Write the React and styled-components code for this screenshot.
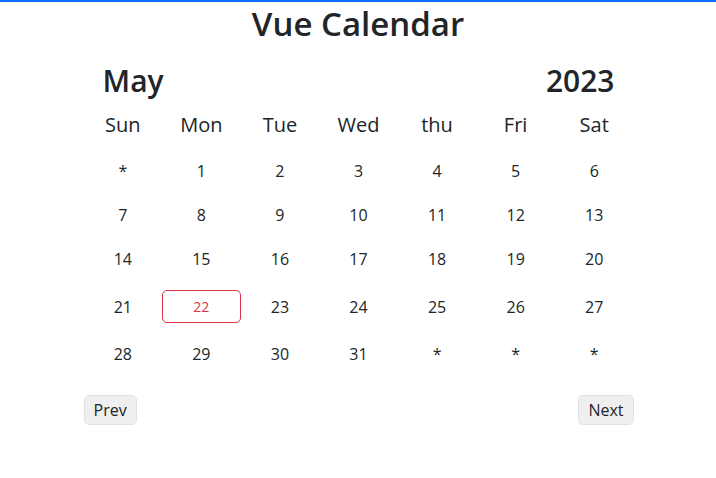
import React from "react";
import styled, { createGlobalStyle } from "styled-components";

const GlobalStyle = createGlobalStyle`
  body {
    margin: 0;
    background: #fff;
    color: #212529;
    font-family: "Open Sans", "Noto Sans", sans-serif;
  }
`;

const DAYS = ["Sun", "Mon", "Tue", "Wed", "thu", "Fri", "Sat"];

const WEEKS = [
  ["*", 1, 2, 3, 4, 5, 6],
  [7, 8, 9, 10, 11, 12, 13],
  [14, 15, 16, 17, 18, 19, 20],
  [21, 22, 23, 24, 25, 26, 27],
  [28, 29, 30, 31, "*", "*", "*"],
];

const TODAY = 22;

const App = () => {
  return (
    <>
      <GlobalStyle />
      <Page>
        <Title>Vue Calendar</Title>
        <Calendar>
          <MonthHeader>
            <span>May</span>
            <span>2023</span>
          </MonthHeader>
          <Grid>
            {DAYS.map((d) => (
              <DayName key={d}>{d}</DayName>
            ))}
            {WEEKS.flat().map((day, i) => (
              <Cell key={i}>
                {day === TODAY ? <Today>{day}</Today> : <DayNum>{day}</DayNum>}
              </Cell>
            ))}
          </Grid>
          <Controls>
            <NavButton>Prev</NavButton>
            <NavButton>Next</NavButton>
          </Controls>
        </Calendar>
      </Page>
    </>
  );
};

const Page = styled.div`
  border-top: 2px solid #0d6efd;
  min-height: 476px;
`;

const Title = styled.h1`
  margin: 0;
  text-align: center;
  font-size: 33px;
  line-height: 44px;
  font-weight: 600;
  color: #212529;
`;

const Calendar = styled.div`
  width: 550px;
  margin: 14px auto 0;
  padding-left: 1px;
`;

const MonthHeader = styled.div`
  display: flex;
  justify-content: space-between;
  padding: 0 19px;
  font-size: 30px;
  line-height: 42px;
  font-weight: 600;
`;

const Grid = styled.div`
  display: grid;
  grid-template-columns: repeat(7, 1fr);
  text-align: center;
`;

const DayName = styled.div`
  margin: 1px 0 2px;
  font-size: 20px;
  line-height: 44px;
  font-weight: 400;
  color: #212529;
`;

const Cell = styled.div`
  padding: 9px 0;
  display: flex;
  justify-content: center;
  align-items: center;
`;

const DayNum = styled.span`
  font-size: 16px;
  line-height: 26px;
`;

const Today = styled.span`
  box-sizing: border-box;
  width: 100%;
  height: 33px;
  display: flex;
  align-items: center;
  justify-content: center;
  border: 1px solid #dc3545;
  border-radius: 5px;
  color: #dc3545;
  font-size: 14px;
`;

const Controls = styled.div`
  display: flex;
  justify-content: space-between;
  margin-top: 19px;
`;

const NavButton = styled.button`
  font-family: "Open Sans", "Noto Sans", sans-serif;
  font-size: 16px;
  height: 30px;
  padding: 0 9px;
  color: #212529;
  background: #efefef;
  border: 1px solid #e2e2e2;
  border-radius: 5px;
  cursor: pointer;
`;

export default App;
